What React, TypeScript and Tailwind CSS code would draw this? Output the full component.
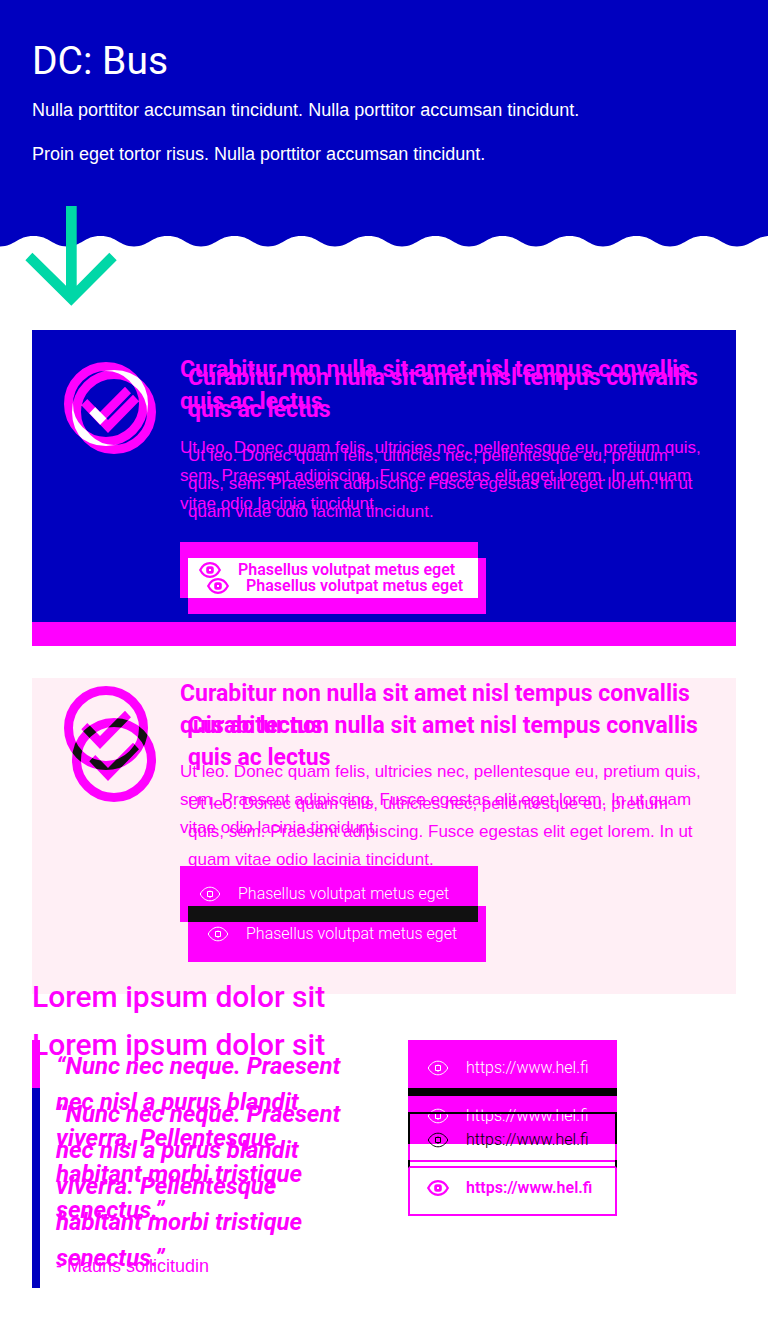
import type { ReactNode } from "react";

const CIRCLE = { cx: 42, cy: 42, r: 37.5 };
const CHECK = "M23.3 37 17.3 43.3 36 63 67 31.3 61 24.7 36 50Z";

function CheckShape({ color, dx = 0, dy = 0 }: { color: string; dx?: number; dy?: number }) {
  return (
    <g transform={`translate(${dx} ${dy})`}>
      <circle {...CIRCLE} fill="none" stroke={color} strokeWidth="9" />
      <path d={CHECK} fill={color} />
    </g>
  );
}

/* Two versions of the badge; the area they share takes the overlap colour. */
function CheckPair({ id, dy, overlap, className }: { id: string; dy: number; overlap: string; className: string }) {
  return (
    <svg width="92" height={84 + dy} viewBox={`0 0 92 ${84 + dy}`} className={className} aria-hidden="true">
      <mask id={id} maskUnits="userSpaceOnUse" x="0" y="0" width="92" height={84 + dy}>
        <CheckShape color="#fff" dx={8} dy={dy} />
      </mask>
      <CheckShape color="#f0f" />
      <CheckShape color="#f0f" dx={8} dy={dy} />
      <g mask={`url(#${id})`}>
        <CheckShape color={overlap} />
      </g>
    </svg>
  );
}

function Eye({ thin = false }: { thin?: boolean }) {
  return (
    <svg width="24" height="24" viewBox="0 0 24 24" fill="none" stroke="currentColor" strokeWidth={thin ? 1 : 2.2} className="shrink-0" aria-hidden="true">
      <path d="M2.2 12C4.4 7.8 8 5.2 12 5.2S19.6 7.8 21.8 12C19.6 16.2 16 18.8 12 18.8S4.4 16.2 2.2 12Z" />
      {thin ? <path d="M9.5 9.5H14.5V14.5H9.5ZM12 8.5V9.5M12 14.5V16" /> : <rect x="9.6" y="9.6" width="4.8" height="4.8" rx="1" strokeWidth="2.8" />}
    </svg>
  );
}

const buttonBase = "relative flex h-14 cursor-pointer items-center text-base";

function ActionButton({ tone, children }: { tone: string; children?: ReactNode }) {
  const thin = tone.includes("font-light");
  return (
    <button type="button" className={`${buttonBase} w-[298px] bg-[#ff00ff] pl-[18px]`}>
      {children}
      <span className={`relative z-20 flex items-center gap-4 ${tone}`}>
        <Eye thin={thin} />
        Phasellus volutpat metus eget
      </span>
    </button>
  );
}

function Title() {
  return (
    <h2 className="text-[23px] leading-8 font-bold">
      Curabitur non nulla sit amet nisl tempus convallis
      <br />
      quis ac lectus
    </h2>
  );
}

const leadText = "font-['Liberation_Sans',Arial,sans-serif] text-lg leading-7";
const bodyText = "font-['Liberation_Sans',Arial,sans-serif] text-[17px] leading-7";

function BodyA() {
  return (
    <p className={`mt-4 ${bodyText}`}>
      Ut leo. Donec quam felis, ultricies nec, pellentesque eu, pretium quis,
      <br />
      sem. Praesent adipiscing. Fusce egestas elit eget lorem. In ut quam
      <br />
      vitae odio lacinia tincidunt.
    </p>
  );
}

function BodyB() {
  return (
    <p className={`mt-4 ${bodyText}`}>
      Ut leo. Donec quam felis, ultricies nec, pellentesque eu, pretium
      <br />
      quis, sem. Praesent adipiscing. Fusce egestas elit eget lorem. In ut
      <br />
      quam vitae odio lacinia tincidunt.
    </p>
  );
}

function LinkStack({ top, bottom }: { top: ReactNode; bottom: ReactNode }) {
  return (
    <div className="flex w-[209px] flex-col gap-4">
      {top}
      {bottom}
    </div>
  );
}

function QuoteText() {
  return (
    <p className="text-2xl leading-9 font-bold whitespace-nowrap italic">
      “Nunc nec neque. Praesent
      <br />
      nec nisl a purus blandit
      <br />
      viverra. Pellentesque
      <br />
      habitant morbi tristique
      <br />
      senectus.”
    </p>
  );
}

export default function App() {
  return (
    <div className="overflow-x-hidden bg-white font-[Roboto,'Liberation_Sans',sans-serif] text-[#ff00ff]">
      <header className="relative">
        <div className="bg-[#0000bf] px-8 pt-9 pb-[68px] text-white">
          <h1 className="text-[39px] leading-[50px]">DC: Bus</h1>
          <p className={`mt-2.5 ${leadText}`}>Nulla porttitor accumsan tincidunt. Nulla porttitor accumsan tincidunt.</p>
          <p className={`mt-4 ${leadText}`}>Proin eget tortor risus. Nulla porttitor accumsan tincidunt.</p>
        </div>
        <svg width="100%" height="11" className="block" aria-hidden="true">
          <defs>
            <pattern id="wave" width="67" height="11" patternUnits="userSpaceOnUse">
              <path d="M0 0H67V10.4C52 10.4 50 0 33.5 0S15 10.4 0 10.4Z" fill="#0000bf" />
            </pattern>
          </defs>
          <rect width="100%" height="11" fill="url(#wave)" />
        </svg>
        <svg width="92" height="100" viewBox="0 0 92 100" className="absolute top-[206px] left-[25px]" aria-hidden="true">
          <path d="M41 0H51.7V79.7L84.3 46.7 91.7 54.2 46.3 99.7.4 54.2 7.4 46.7 41 79.7Z" fill="#00d7a7" />
        </svg>
      </header>

      <main className="px-8 pt-[83px] pb-12">
        <section className="grid border-b-24 border-[#ff00ff] bg-[#0000bf] whitespace-nowrap">
          <CheckPair id="badge-top" dy={8} overlap="#fff" className="mt-8 ml-8 [grid-area:1/1]" />
          <div className="pt-6 pl-[148px] [grid-area:1/1]">
            <Title />
            <BodyA />
            <div className="mt-6">
              <ActionButton tone="font-semibold" />
            </div>
          </div>
          <div className="-mb-6 pt-8 pb-8 pl-[156px] [grid-area:1/1]">
            <Title />
            <BodyB />
            <div className="mt-8">
              <ActionButton tone="font-semibold">
                <span className="absolute top-0 left-0 z-10 h-10 w-[290px] bg-white" />
              </ActionButton>
            </div>
          </div>
        </section>

        <section className="mt-8 grid bg-[#ffeff5] whitespace-nowrap">
          <CheckPair id="badge-bottom" dy={32} overlap="#111" className="mt-2 ml-8 [grid-area:1/1]" />
          <div className="pl-[148px] [grid-area:1/1]">
            <Title />
            <BodyA />
            <div className="mt-6">
              <ActionButton tone="font-light text-white" />
            </div>
          </div>
          <div className="py-8 pl-[156px] [grid-area:1/1]">
            <Title />
            <BodyB />
            <div className="mt-8">
              <ActionButton tone="font-light text-white">
                <span className="absolute top-0 left-0 z-10 h-4 w-[290px] bg-[#111]" />
              </ActionButton>
            </div>
          </div>
        </section>

        <section className="-mt-4 grid">
          <div className="[grid-area:1/1]">
            <h2 className="text-[30px] leading-[38px] font-medium">Lorem ipsum dolor sit</h2>
            <div className="mt-6 grid grid-cols-2 gap-12">
              <div>
                <blockquote className="border-l-8 border-[#ff00ff] pt-2 pb-3 pl-4">
                  <QuoteText />
                </blockquote>
                <p className={`mt-3 pl-6 ${leadText}`}>- Mauris sollicitudin</p>
              </div>
              <LinkStack
                top={
                  <a href="https://www.hel.fi" className={`${buttonBase} gap-4 bg-[#ff00ff] pl-[18px] font-light text-white`}>
                    <Eye thin />
                    https://www.hel.fi
                  </a>
                }
                bottom={
                  <a href="https://www.hel.fi" className={`${buttonBase} z-10 gap-4 border-2 border-black border-b-[#ff00ff] pl-4 font-light text-black`}>
                    <span className="absolute inset-x-[-2px] bottom-1.5 h-4 border-x-2 border-[#ff00ff]" />
                    <Eye thin />
                    https://www.hel.fi
                  </a>
                }
              />
            </div>
          </div>
          <div className="pt-12 [grid-area:1/1]">
            <h2 className="text-[30px] leading-[38px] font-medium">Lorem ipsum dolor sit</h2>
            <div className="mt-6 grid grid-cols-2 gap-12">
              <blockquote className="border-l-8 border-[#0000bf] pt-2 pb-3 pl-4">
                <QuoteText />
              </blockquote>
              <LinkStack
                top={
                  <a href="https://www.hel.fi" className={`${buttonBase} gap-4 bg-[#ff00ff] pl-[18px] font-light text-white`}>
                    <span className="absolute inset-x-0 top-0 h-2 bg-black" />
                    <Eye thin />
                    https://www.hel.fi
                  </a>
                }
                bottom={
                  <a href="https://www.hel.fi" className={`${buttonBase} gap-4 border-2 border-[#ff00ff] pl-4 font-semibold`}>
                    <Eye />
                    https://www.hel.fi
                  </a>
                }
              />
            </div>
          </div>
        </section>
      </main>
    </div>
  );
}
